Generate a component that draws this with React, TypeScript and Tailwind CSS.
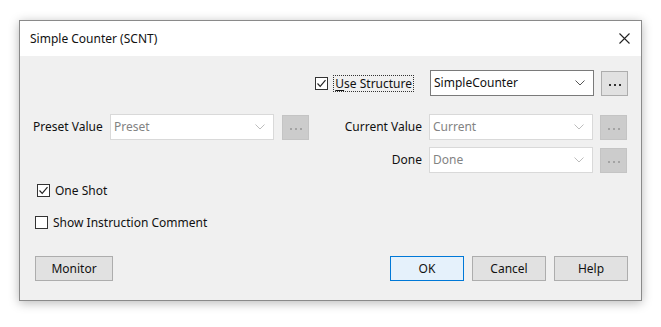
import React from 'react';

const font = { fontFamily: '"Noto Sans", "Open Sans", Arial, sans-serif' };

const Check = ({ checked }: { checked: boolean }) => (
  <span className="flex h-[13px] w-[13px] shrink-0 items-center justify-center border border-[#333333] bg-white">
    {checked && (
      <svg width="11" height="11" viewBox="0 0 11 11" fill="none">
        <path d="M1.5 5.5 L4.2 8.3 L9.5 2.2" stroke="#222" strokeWidth="1.2" />
      </svg>
    )}
  </span>
);

const Chevron = ({ color }: { color: string }) => (
  <svg width="10" height="6" viewBox="0 0 10 6" fill="none">
    <path d="M0.5 0.5 L5 5 L9.5 0.5" stroke={color} strokeWidth="1" />
  </svg>
);

type ComboProps = { value: string; disabled?: boolean };

const Combo = ({ value, disabled }: ComboProps) => (
  <div
    className={`flex h-[26px] w-[164px] shrink-0 items-center justify-between bg-white pl-[3px] pr-[8px] ${
      disabled ? 'border border-[#d9d9d9] text-[#838383]' : 'border border-[#7a7a7a] text-[#111]'
    }`}
  >
    <span className="text-[12px]">{value}</span>
    <Chevron color={disabled ? '#bdbdbd' : '#555'} />
  </div>
);

const Ellipsis = ({ disabled }: { disabled?: boolean }) => (
  <div
    className={`flex h-[25px] w-[27px] shrink-0 items-center justify-center gap-[3px] border pt-[4px] ${
      disabled ? 'border-[#c4c4c4] bg-[#cccccc]' : 'border-[#adadad] bg-[#e1e1e1]'
    }`}
  >
    {[0, 1, 2].map((i) => (
      <span key={i} className={`h-[2px] w-[2px] ${disabled ? 'bg-[#a3a3a3]' : 'bg-[#333]'}`} />
    ))}
  </div>
);

const Button = ({ label, primary, wide }: { label: string; primary?: boolean; wide?: boolean }) => (
  <div
    className={`flex h-[25px] items-center justify-center border text-[12px] text-[#111] ${
      wide ? 'w-[78px]' : 'w-[74px]'
    } ${primary ? 'border-[#0078d7] bg-[#e5f1fb]' : 'border-[#adadad] bg-[#e1e1e1]'}`}
  >
    {label}
  </div>
);

export default function App() {
  return (
    <div className="h-[327px] w-[661px] bg-white pl-[19px] pt-[20px]" style={font}>
      <div className="flex h-[281px] w-[623px] flex-col border border-[#8a8a8a] bg-[#f0f0f0] shadow-[0_2px_10px_rgba(0,0,0,0.28)]">
        <div className="flex h-[35px] items-center justify-between bg-white pl-[10px] pr-[11px] text-[12px] text-[#111]">
          <span>Simple Counter (SCNT)</span>
          <svg width="11" height="11" viewBox="0 0 11 11" fill="none">
            <path d="M0.5 0.5 L10.5 10.5 M10.5 0.5 L0.5 10.5" stroke="#222" strokeWidth="1.1" />
          </svg>
        </div>

        <div className="flex flex-1 flex-col pl-[13px] pr-[13px] pt-[14px] text-[12px] text-[#111]">
          <div className="flex h-[26px] items-center justify-end">
            <Check checked />
            <span className="ml-[5px] border border-dotted border-[#333] px-px leading-[15px]">
              <span className="underline decoration-1 underline-offset-2">U</span>se Structure
            </span>
            <div className="ml-[16px]">
              <Combo value="SimpleCounter" />
            </div>
            <div className="ml-[7px]">
              <Ellipsis />
            </div>
          </div>

          <div className="mt-[18px] flex items-start">
            <div className="flex w-[276px] items-center">
              <span className="w-[77px]">Preset Value</span>
              <Combo value="Preset" disabled />
              <div className="ml-[8px]">
                <Ellipsis disabled />
              </div>
            </div>
            <div className="flex flex-col gap-[7px]">
              <div className="flex items-center">
                <span className="w-[120px] pr-[7px] text-right">Current Value</span>
                <Combo value="Current" disabled />
                <div className="ml-[7px]">
                  <Ellipsis disabled />
                </div>
              </div>
              <div className="flex items-center">
                <span className="w-[120px] pr-[7px] text-right">Done</span>
                <Combo value="Done" disabled />
                <div className="ml-[7px]">
                  <Ellipsis disabled />
                </div>
              </div>
            </div>
          </div>

          <div className="mt-[10px] flex h-[15px] items-center pl-[4px]">
            <Check checked />
            <span className="ml-[5px]">One Shot</span>
          </div>
          <div className="mt-[17px] flex h-[15px] items-center pl-[2px]">
            <Check checked={false} />
            <span className="ml-[5px]">Show Instruction Comment</span>
          </div>

          <div className="mt-[26px] flex items-center justify-between pl-[2px]">
            <Button label="Monitor" wide />
            <div className="flex gap-[8px]">
              <Button label="OK" primary />
              <Button label="Cancel" />
              <Button label="Help" />
            </div>
          </div>
        </div>
      </div>
    </div>
  );
}
